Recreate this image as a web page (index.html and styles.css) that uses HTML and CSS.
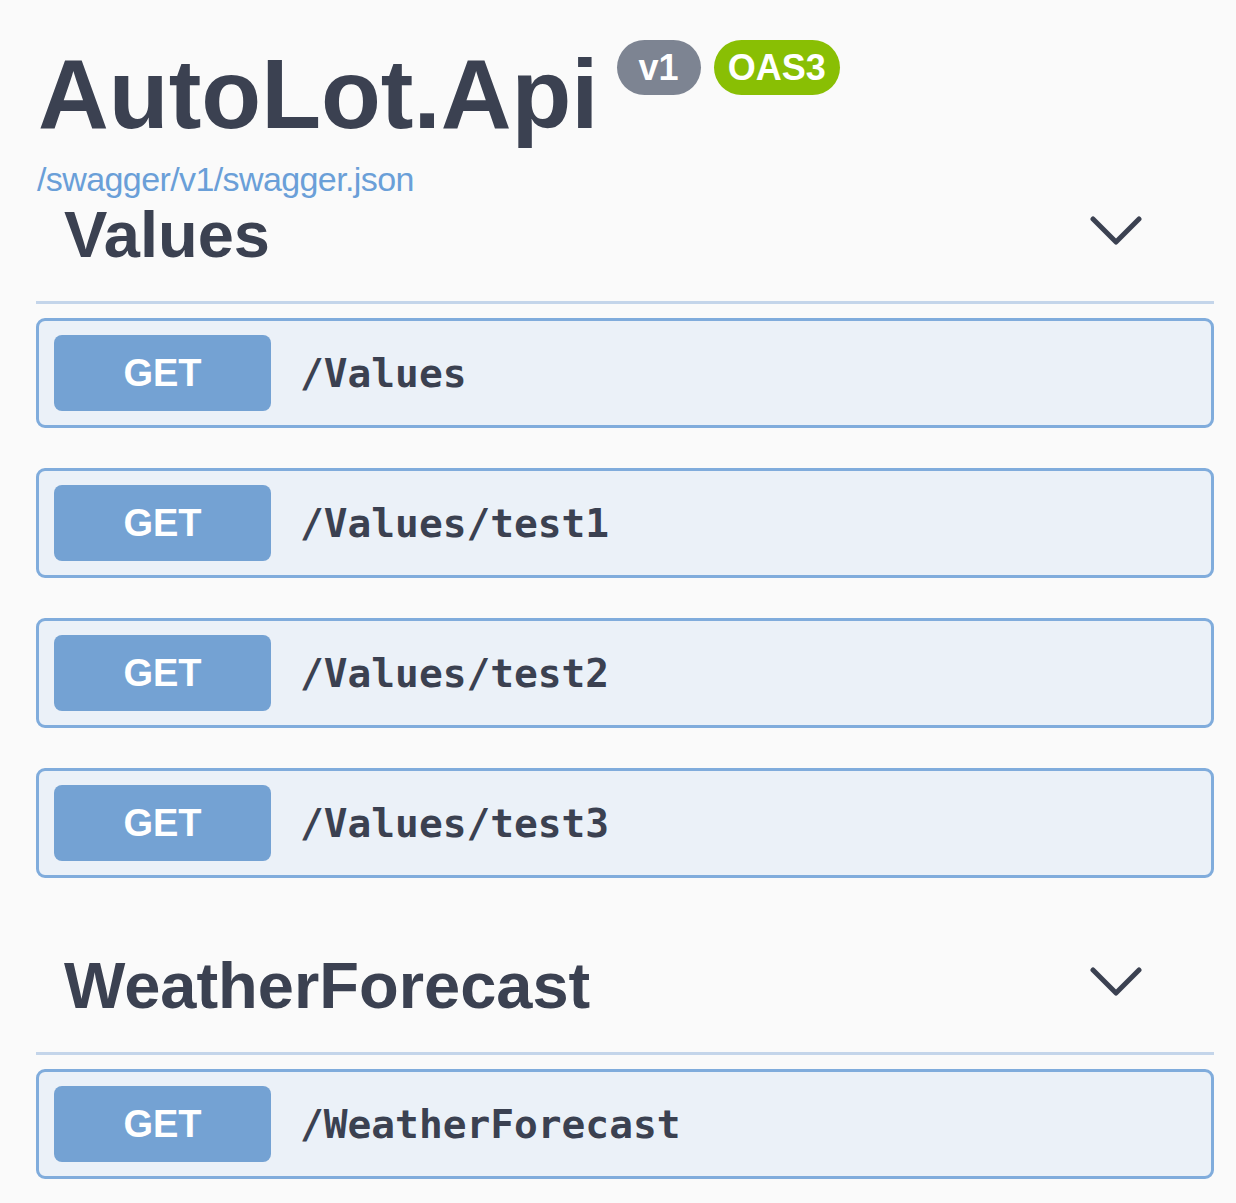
FILE: index.html
```html
<!DOCTYPE html>
<html lang="en">
<head>
<meta charset="utf-8">
<title>AutoLot.Api</title>
<link rel="stylesheet" href="styles.css">
</head>
<body>
<div class="wrap">
  <div class="info">
    <h1 class="title">
      <span class="title-text">AutoLot.Api</span>
      <span class="badge badge-version">v1</span>
      <span class="badge badge-oas">OAS3</span>
    </h1>
    <a class="link" href="#">/swagger/v1/swagger.json</a>
  </div>

  <section class="section">
    <h3 class="tag">
      <span>Values</span>
      <svg class="chevron" viewBox="0 0 52 30" width="52" height="30"><polyline points="3,3 26,26 49,3" fill="none" stroke="#3b4151" stroke-width="5" stroke-linecap="round" stroke-linejoin="round"/></svg>
    </h3>
    <div class="op"><span class="method">GET</span><span class="path">/Values</span></div>
    <div class="op"><span class="method">GET</span><span class="path">/Values/test1</span></div>
    <div class="op"><span class="method">GET</span><span class="path">/Values/test2</span></div>
    <div class="op"><span class="method">GET</span><span class="path">/Values/test3</span></div>
  </section>

  <section class="section">
    <h3 class="tag">
      <span>WeatherForecast</span>
      <svg class="chevron" viewBox="0 0 52 30" width="52" height="30"><polyline points="3,3 26,26 49,3" fill="none" stroke="#3b4151" stroke-width="5" stroke-linecap="round" stroke-linejoin="round"/></svg>
    </h3>
    <div class="op"><span class="method">GET</span><span class="path">/WeatherForecast</span></div>
  </section>
</div>
</body>
</html>
```

FILE: styles.css
```css
html, body {
  margin: 0;
  padding: 0;
  background: #fafafa;
}

body {
  font-family: "Liberation Sans", Arial, sans-serif;
  color: #3b4151;
}

.wrap {
  padding: 0 22px 0 36px;
}

.info {
  margin-bottom: -2px;
}

.title {
  display: flex;
  align-items: flex-start;
  margin: 44px 0 0 2px;
  font-size: 98px;
  line-height: 100px;
  font-weight: 700;
  color: #3b4151;
}

.badge {
  display: inline-block;
  margin-top: -4px;
  height: 55px;
  line-height: 55px;
  border-radius: 28px;
  font-size: 36px;
  font-weight: 700;
  color: #ffffff;
}

.badge-version {
  margin-left: 18px;
  padding: 0 22px;
  background: #7d8492;
}

.badge-oas {
  margin-left: 13px;
  padding: 0 14px;
  background: #89bf04;
}

.link {
  display: block;
  margin-top: 15px;
  margin-left: 1px;
  font-size: 34px;
  letter-spacing: -0.6px;
  line-height: 40px;
  color: #6a9fd8;
  text-decoration: none;
}

.section + .section {
  margin-top: 70px;
}

.tag {
  display: flex;
  align-items: center;
  justify-content: space-between;
  margin: 0 0 14px;
  padding: 0 72px 29px 28px;
  border-bottom: 3px solid #c4d5ea;
  font-size: 65px;
  line-height: 75px;
  font-weight: 700;
  color: #3b4151;
}

.chevron {
  display: block;
  margin-top: -8px;
}

.op {
  display: flex;
  align-items: center;
  margin-bottom: 40px;
  padding: 14px 15px;
  border: 3px solid #80acdc;
  border-radius: 9px;
  background: #ebf1f8;
}

.method {
  display: flex;
  align-items: center;
  justify-content: center;
  width: 217px;
  height: 76px;
  border-radius: 8px;
  background: #74a2d3;
  color: #ffffff;
  font-size: 38px;
  font-weight: 700;
}

.path {
  margin-left: 29px;
  font-family: "DejaVu Sans Mono", monospace;
  font-weight: 700;
  font-size: 39.5px;
  color: #3b4151;
}
```
